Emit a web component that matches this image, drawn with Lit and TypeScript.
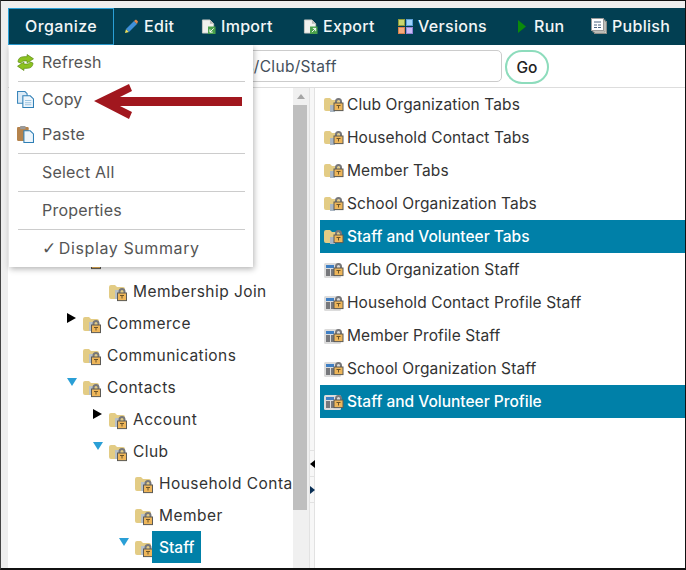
import { LitElement, html, css, svg } from 'lit';
import { customElement } from 'lit/decorators.js';

// small shared lock, drawn over the folder and table icons
const lock = (x: number, y: number) => svg`
  <g transform="translate(${x} ${y})">
    <path d="M2.500 5V3a2.500 2.500 0 0 1 5 0v2" fill="none" stroke="#77777a" stroke-width="2"/>
    <rect x=".5" y="4.500" width="9" height="7.600" fill="#eeb65a" stroke="#5c5a55"/>
    <path d="M3 7h4M5 7v3" stroke="#6d5427" stroke-width="1"/>
  </g>`;

const folderIcon = svg`
  <svg class="icon folder" viewBox="0 0 18 18">
    <path d="M0 3q0-2 2-2h4l2 2h6q2 0 2 2v10H2q-2 0-2-2z" fill="#e3cc85"/>
    <rect x="6" y="6" width="4" height="9" fill="#b7c0c8"/>
    ${lock(8, 4.500)}
  </svg>`;

const tabsIcon = svg`
  <svg class="icon wide" viewBox="0 0 20 16">
    <path d="M0 3q0-2 2-2h4l2 2h6q2 0 2 2v9H2q-2 0-2-2z" fill="#e3cc85"/>
    <rect x="6" y="8" width="5" height="7" fill="#a9b6c4"/>
    ${lock(9.500, 1.500)}
  </svg>`;

const tableIcon = svg`
  <svg class="icon wide" viewBox="0 0 20 16">
    <rect x="0" y="1" width="17" height="15" rx="1.500" fill="#dcdcdc"/>
    <rect x="2" y="3" width="8" height="3" fill="#3f7fc4"/>
    <rect x="2" y="7" width="4" height="7" fill="#77787c"/>
    <rect x="7" y="7" width="4" height="7" fill="#77787c"/>
    ${lock(9.500, 1.500)}
  </svg>`;

const pencil = svg`
  <svg class="nav-icon" viewBox="0 0 15 15">
    <path d="M1 14l1-4 3 3z" fill="#efe05a"/>
    <path d="M2 10l8-8 3 3-8 8z" fill="#3f8fd8"/>
    <path d="M10 2l2-1.500 2 2-1 2.500z" fill="#e8894a"/>
  </svg>`;

const docArrow = (flip: boolean) => svg`
  <svg class="nav-icon" viewBox="0 0 15 16">
    <path d="M1 1h8l4 4v10H1z" fill="#f2f2ee" stroke="#c9c9c4"/>
    <path d="M9 1v4h4z" fill="#b9b9b4"/>
    <rect x="7" y="8" width="8" height="8" fill="#49a14a"/>
    <path d=${flip ? 'M9 14l4-4m-3 0h3v3' : 'M13 10l-4 4m0-3v3h3'} fill="none" stroke="#fff" stroke-width="1"/>
  </svg>`;

const versions = svg`
  <svg class="nav-icon" viewBox="0 0 15 15">
    <rect x=".5" y=".5" width="6" height="6" fill="#c9d66e" stroke="#8f9c3c"/>
    <rect x="8.500" y=".5" width="6" height="6" fill="#9fd2fb" stroke="#5b9fd8"/>
    <rect x=".5" y="8.500" width="6" height="6" fill="#f6ab7d" stroke="#d9824d"/>
    <rect x="8.500" y="8.500" width="6" height="6" fill="#c9bcf5" stroke="#9484d6"/>
  </svg>`;

const run = svg`
  <svg class="nav-icon run" viewBox="0 0 8 13"><path d="M0 0l8 6.500-8 6.500z" fill="#0b8a0b"/></svg>`;

const publish = svg`
  <svg class="nav-icon pub" viewBox="0 0 16 16">
    <rect x="3.500" y="3.500" width="12" height="12" fill="#e9e9e4" stroke="#8d8d88"/>
    <rect x="2" y="2" width="12" height="12" fill="#efefea" stroke="#8d8d88"/>
    <rect x=".5" y=".5" width="12" height="12" fill="#fff" stroke="#9a9a9a"/>
    <path d="M3 4h7M3 7h3m1 0h3M3 9.500h3m1 0h3" stroke="#4a6280" stroke-width="1"/>
  </svg>`;

const refresh = svg`
  <svg class="menu-icon" viewBox="0 0 16 16">
    <path d="M1 7.500C1 3.500 4 2.500 7.500 2.500H9.500V.5L15.500 4.500 9.500 8.500V6.500H7.500C5.500 6.500 4.500 7 3.500 8.500z" fill="#8cc21f" stroke="#5d8c14" stroke-width=".7"/>
    <path d="M15 8.500C15 12.500 12 13.500 8.500 13.500H6.500V15.500L.5 11.500 6.500 7.500V9.500H8.500C10.500 9.500 11.500 9 12.500 7.500z" fill="#8cc21f" stroke="#5d8c14" stroke-width=".7"/>
  </svg>`;

const copy = svg`
  <svg class="menu-icon" viewBox="0 0 16 16">
    <path d="M.5.5h7l2 2v9h-9z" fill="#dcebf7" stroke="#3a86bb"/>
    <path d="M5.500 4.500h7l3 3v8h-10z" fill="#eef6fc" stroke="#2f7fb5"/>
    <path d="M7.500 9h6M7.500 11h6M7.500 13h6" stroke="#9cc4e0"/>
  </svg>`;

const paste = svg`
  <svg class="menu-icon" viewBox="0 0 16 16">
    <rect x="0" y="1" width="11" height="13" rx="1" fill="#b5834c"/>
    <rect x="3" y="0" width="5" height="3" fill="#9a9a9a"/>
    <path d="M6.500 4.500h6l3 3v8h-9z" fill="#eef6fc" stroke="#2f7fb5"/>
  </svg>`;

interface TreeRow { name: string; level: number; arrow?: 'open' | 'closed'; selected?: boolean }

// the first row sits behind the open menu, only the bottom of its icon shows
const treeRows: TreeRow[] = [
  { name: '', level: 1 },
  { name: 'Membership Join', level: 2 },
  { name: 'Commerce', level: 1, arrow: 'closed' },
  { name: 'Communications', level: 1 },
  { name: 'Contacts', level: 1, arrow: 'open' },
  { name: 'Account', level: 2, arrow: 'closed' },
  { name: 'Club', level: 2, arrow: 'open' },
  { name: 'Household Contact', level: 3 },
  { name: 'Member', level: 3 },
  { name: 'Staff', level: 3, arrow: 'open', selected: true },
];

const listRows = [
  { name: 'Club Organization Tabs', icon: tabsIcon },
  { name: 'Household Contact Tabs', icon: tabsIcon },
  { name: 'Member Tabs', icon: tabsIcon },
  { name: 'School Organization Tabs', icon: tabsIcon },
  { name: 'Staff and Volunteer Tabs', icon: tabsIcon, selected: true },
  { name: 'Club Organization Staff', icon: tableIcon },
  { name: 'Household Contact Profile Staff', icon: tableIcon },
  { name: 'Member Profile Staff', icon: tableIcon },
  { name: 'School Organization Staff', icon: tableIcon },
  { name: 'Staff and Volunteer Profile', icon: tableIcon, selected: true },
];

@customElement('app-root')
export class AppRoot extends LitElement {
  static override styles = css`
    :host {
      display: block;
      font-family: Inter, "Liberation Sans", sans-serif;
    }
    .frame {
      position: relative;
      box-sizing: border-box;
      width: 686px;
      height: 570px;
      padding: 7px 0 0 7px;
      background: #eeeeee;
      border-top: 1px solid #111;
      border-right: 1px solid #111;
      border-bottom: 2px solid #111;
      border-left: 1px solid #444;
      display: flex;
      flex-direction: column;
      overflow: hidden;
    }
    .nav {
      flex: none;
      height: 37px;
      background: #023f52;
      display: grid;
      grid-template-columns: 106px 77px 102px 95px 120px 73px 1fr;
      color: #f2f6f7;
      font-size: 16px;
      font-weight: 500;
      letter-spacing: 0.3px;
    }
    .nav-item {
      display: flex;
      align-items: center;
      gap: 5px;
      padding: 0 0 1px 10px;
      box-sizing: border-box;
      white-space: nowrap;
    }
    .nav-item.active {
      border: 1px solid #2a9fd6;
      padding-left: 16px;
      letter-spacing: 0.4px;
    }
    .nav-icon { width: 15px; height: 15px; flex: none; }
    .nav-icon.run { width: 8px; height: 13px; margin-right: 3px; }
    .nav-icon.pub { width: 16px; height: 16px; }
    .body {
      flex: 1;
      min-height: 0;
      background: #fff;
      display: flex;
      flex-direction: column;
    }
    .address {
      flex: none;
      height: 43px;
      box-sizing: border-box;
      border-bottom: 1px solid #dddddd;
      padding: 5px 136px 0 115px;
      display: flex;
      align-items: flex-start;
      gap: 3px;
    }
    .path {
      flex: 1;
      height: 32px;
      box-sizing: border-box;
      border: 1px solid #cccccc;
      border-radius: 5px;
      padding-left: 56px;
      display: flex;
      align-items: center;
      color: #44505c;
      font-size: 15.500px;
      letter-spacing: 0.3px;
      white-space: nowrap;
    }
    .go {
      width: 44px;
      height: 34px;
      box-sizing: border-box;
      border: 2px solid #8ddcbc;
      border-radius: 17px;
      display: flex;
      align-items: center;
      justify-content: center;
      color: #222;
      font-size: 15.500px;
      font-weight: 500;
    }
    .panes {
      flex: 1;
      min-height: 0;
      display: flex;
    }
    .tree {
      width: 285px;
      flex: none;
      box-sizing: border-box;
      padding-top: 155px;
      overflow: hidden;
    }
    .tree-row {
      height: 32px;
      display: flex;
      align-items: center;
      white-space: nowrap;
      color: #333;
      font-size: 15.500px;
      letter-spacing: 0.45px;
    }
    .twisty {
      width: 16px;
      height: 32px;
      flex: none;
      position: relative;
    }
    .twisty.closed::before {
      content: '';
      position: absolute;
      left: 0;
      top: 6px;
      border-left: 9px solid #000;
      border-top: 5px solid transparent;
      border-bottom: 5px solid transparent;
    }
    .twisty.open::before {
      content: '';
      position: absolute;
      left: 0;
      top: 7px;
      border-top: 8px solid #2a9fd6;
      border-left: 5px solid transparent;
      border-right: 5px solid transparent;
    }
    .icon.folder { width: 18px; height: 18px; flex: none; margin-top: 3px; }
    .icon.wide { width: 20px; height: 16px; flex: none; }
    .label {
      height: 32px;
      line-height: 33px;
      padding: 0 7px;
      margin-left: -1px;
    }
    .label.selected {
      background: #0080a8;
      color: #fff;
      font-weight: 500;
      letter-spacing: 0;
    }
    .scroll {
      width: 16px;
      flex: none;
      background: #f0f0f0;
      position: relative;
      padding-top: 17px;
      box-sizing: border-box;
    }
    .scroll::before {
      content: '';
      position: absolute;
      left: 4px;
      top: 6px;
      border-bottom: 5px solid #a5a5a5;
      border-left: 4px solid transparent;
      border-right: 4px solid transparent;
    }
    .thumb {
      width: 14px;
      height: 405px;
      background: #bfbfbf;
    }
    .gutter {
      width: 4px;
      flex: none;
      background: #f7f7f7;
      border-left: 1px solid #e2e2e2;
      border-right: 1px solid #e2e2e2;
      padding-top: 362px;
      display: flex;
      flex-direction: column;
    }
    .grip {
      height: 26px;
      border-top: 1px solid #e2e2e2;
      box-sizing: border-box;
      display: flex;
      align-items: center;
    }
    .grip.end { border-bottom: 1px solid #e2e2e2; height: 27px; }
    .left-tri {
      border-right: 5px solid #000;
      border-top: 4px solid transparent;
      border-bottom: 4px solid transparent;
    }
    .right-tri {
      border-left: 5px solid #0a2f55;
      border-top: 4px solid transparent;
      border-bottom: 4px solid transparent;
    }
    .list {
      flex: 1;
      min-width: 0;
      padding-left: 5px;
    }
    .list-row {
      height: 33px;
      display: flex;
      align-items: center;
      gap: 3px;
      padding-left: 4px;
      color: #333;
      font-size: 15.500px;
      letter-spacing: 0.1px;
      white-space: nowrap;
    }
    .list-row.selected {
      background: #0080a8;
      color: #fff;
      font-weight: 500;
      letter-spacing: 0;
    }
    .menu {
      position: absolute;
      left: 8px;
      top: 44px;
      width: 244px;
      height: 222px;
      background: #fff;
      box-shadow: 1px 2px 6px rgba(0, 0, 0, 0.3);
      color: #555;
      font-size: 16px;
      letter-spacing: 0.2px;
      display: flex;
      flex-direction: column;
    }
    .menu-item {
      display: flex;
      align-items: center;
      box-sizing: border-box;
      height: 37px;
      padding: 0 0 2px 33px;
      position: relative;
      white-space: nowrap;
    }
    .menu-item.first { height: 36px; }
    .menu-item.copy { height: 35px; }
    .menu-item.paste { height: 36px; }
    .menu-item.summary { letter-spacing: 0.6px; }
    .check { font-family: "DejaVu Sans", sans-serif; font-size: 17px; margin-right: 2px; }
    .menu-sep {
      height: 1px;
      background: #cccccc;
      margin: 0 8px 0 9px;
      flex: none;
    }
    .menu-icon {
      position: absolute;
      left: 8px;
      top: 50%;
      margin-top: -9px;
      width: 17px;
      height: 17px;
    }
    .pointer {
      position: absolute;
      left: 92px;
      top: 82px;
      width: 150px;
      height: 36px;
    }
  `;

  override render() {
    return html`
      <div class="frame">
        <div class="nav">
          <div class="nav-item active">Organize</div>
          <div class="nav-item">${pencil}Edit</div>
          <div class="nav-item">${docArrow(false)}Import</div>
          <div class="nav-item">${docArrow(true)}Export</div>
          <div class="nav-item">${versions}Versions</div>
          <div class="nav-item">${run}Run</div>
          <div class="nav-item">${publish}Publish</div>
        </div>
        <div class="body">
          <div class="address">
            <div class="path">/Contacts/Club/Staff</div>
            <div class="go">Go</div>
          </div>
          <div class="panes">
            <div class="tree">
              ${treeRows.map(
                (r) => html`
                  <div class="tree-row" style="padding-left:${r.level * 26 + 33}px">
                    <span class="twisty ${r.arrow ?? ''}"></span>
                    ${folderIcon}
                    <span class="label ${r.selected ? 'selected' : ''}">${r.name}</span>
                  </div>
                `,
              )}
            </div>
            <div class="scroll"><div class="thumb"></div></div>
            <div class="gutter">
              <div class="grip"><span class="left-tri"></span></div>
              <div class="grip end"><span class="right-tri"></span></div>
            </div>
            <div class="list">
              ${listRows.map(
                (r) => html`
                  <div class="list-row ${r.selected ? 'selected' : ''}">${r.icon}${r.name}</div>
                `,
              )}
            </div>
          </div>
        </div>
        <div class="menu">
          <div class="menu-item first">${refresh}Refresh</div>
          <div class="menu-sep"></div>
          <div class="menu-item copy">${copy}Copy</div>
          <div class="menu-item paste">${paste}Paste</div>
          <div class="menu-sep"></div>
          <div class="menu-item">Select All</div>
          <div class="menu-sep"></div>
          <div class="menu-item">Properties</div>
          <div class="menu-sep"></div>
          <div class="menu-item summary"><span class="check">✓</span>Display Summary</div>
        </div>
        <svg class="pointer" viewBox="0 0 150 36">
          <path d="M1 18L36 1l3 7-12 6h122v9H27l12 6-3 7z" fill="#a1171e"/>
        </svg>
      </div>
    `;
  }
}
